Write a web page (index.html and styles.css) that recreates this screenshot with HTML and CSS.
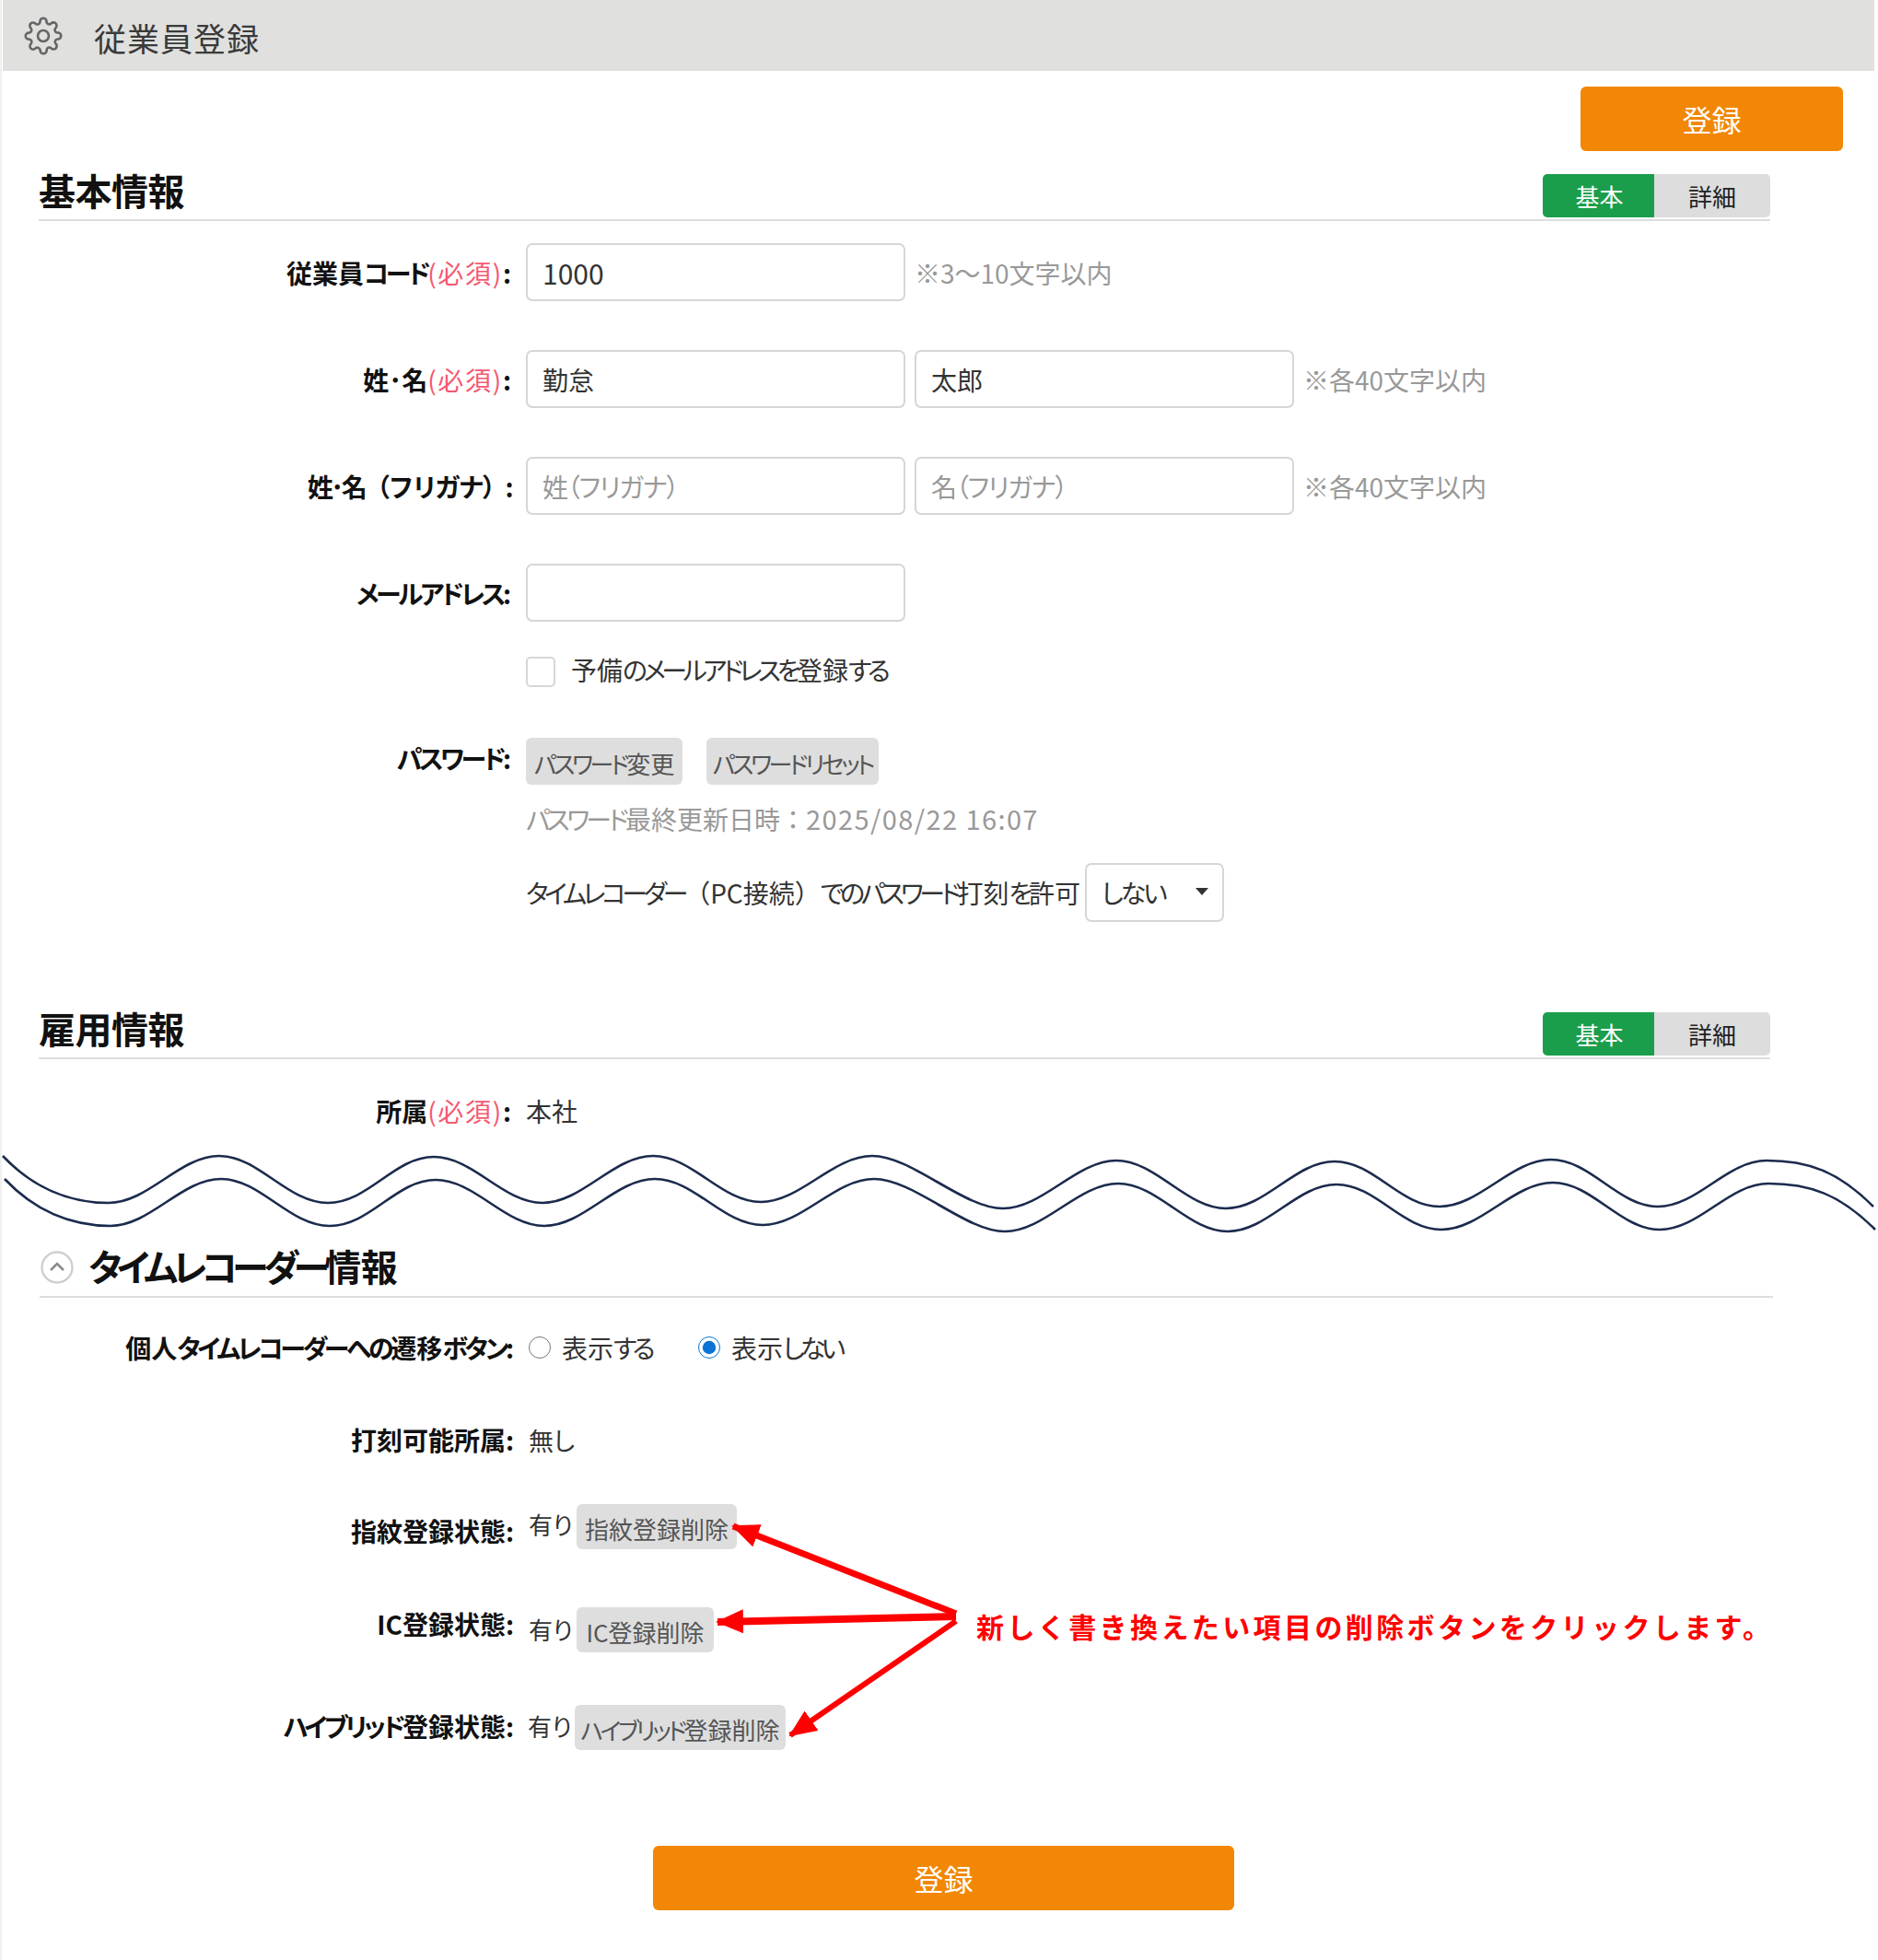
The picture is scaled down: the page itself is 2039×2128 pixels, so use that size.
FILE: index.html
```html
<!DOCTYPE html>
<html lang="ja">
<head>
<meta charset="utf-8">
<title>従業員登録</title>
<link rel="stylesheet" href="styles.css">
</head>
<body>
<div class="page">
  <header class="topbar">
    <svg class="gear" viewBox="0 0 24 24" fill="none" stroke="#666" stroke-width="1.5" stroke-linejoin="round"><circle cx="12" cy="12" r="3.4"/><path d="M19.4 15a1.65 1.65 0 0 0 .33 1.82l.06.06a2 2 0 0 1 0 2.83 2 2 0 0 1-2.83 0l-.06-.06a1.65 1.65 0 0 0-1.82-.33 1.65 1.65 0 0 0-1 1.51V21a2 2 0 0 1-2 2 2 2 0 0 1-2-2v-.09A1.65 1.65 0 0 0 9 19.4a1.65 1.65 0 0 0-1.82.33l-.06.06a2 2 0 0 1-2.83 0 2 2 0 0 1 0-2.83l.06-.06a1.65 1.65 0 0 0 .33-1.82 1.65 1.65 0 0 0-1.51-1H3a2 2 0 0 1-2-2 2 2 0 0 1 2-2h.09A1.65 1.65 0 0 0 4.6 9a1.65 1.65 0 0 0-.33-1.82l-.06-.06a2 2 0 0 1 0-2.83 2 2 0 0 1 2.83 0l.06.06a1.65 1.65 0 0 0 1.82.33H9a1.65 1.65 0 0 0 1-1.51V3a2 2 0 0 1 2-2 2 2 0 0 1 2 2v.09a1.65 1.65 0 0 0 1 1.51 1.65 1.65 0 0 0 1.82-.33l.06-.06a2 2 0 0 1 2.83 0 2 2 0 0 1 0 2.83l-.06.06a1.65 1.65 0 0 0-.33 1.82V9a1.65 1.65 0 0 0 1.51 1H21a2 2 0 0 1 2 2 2 2 0 0 1-2 2h-.09a1.65 1.65 0 0 0-1.51 1z"/></svg>
    <h1 class="page-title">従業員登録</h1>
  </header>

  <div class="toolbar"><button class="btn-primary btn-top">登録</button></div>

  <section class="section sec-basic">
    <div class="sec-head">
      <h2 class="sec-title">基本情報</h2>
      <div class="tabs"><span class="tab tab-on">基本</span><span class="tab">詳細</span></div>
    </div>
    <div class="row row-first">
      <div class="label">従業員<span class="kana">コード</span><span class="req">(必須)</span>:</div>
      <input class="field field-num" value="1000">
      <span class="hint">※3～10文字以内</span>
    </div>
    <div class="row">
      <div class="label">姓･名<span class="req">(必須)</span>:</div>
      <input class="field" value="勤怠">
      <input class="field" value="太郎">
      <span class="hint">※各40文字以内</span>
    </div>
    <div class="row">
      <div class="label label-wide">姓･名（フリガナ）:</div>
      <input class="field" placeholder="姓（フリガナ）">
      <input class="field" placeholder="名（フリガナ）">
      <span class="hint">※各40文字以内</span>
    </div>
    <div class="row">
      <div class="label"><span class="kana">メールアドレス</span>:</div>
      <input class="field">
    </div>
    <div class="indent check-row">
      <span class="checkbox"></span>
      <span class="check-text">予備<span class="kana">のメールアドレスを</span>登録<span class="kana">する</span></span>
    </div>
    <div class="row-pass">
      <div class="label"><span class="kana">パスワード</span>:</div>
      <button class="btn-gray btn-change"><span class="kana">パスワード</span>変更</button>
      <button class="btn-gray btn-reset"><span class="kana">パスワードリセット</span></button>
    </div>
    <div class="indent updated"><span class="kana">パスワード</span>最終更新日時<span class="wide">：</span><span class="digits">2025/08/22 16:07</span></div>
    <div class="indent select-row">
      <span class="select-text"><span class="kana">タイムレコーダー</span><span class="wide">（</span>PC接続<span class="wide">）</span><span class="kana">でのパスワード</span>打刻<span class="kana">を</span>許可</span>
      <div class="select-wrap">
        <select class="select"><option>しない</option></select>
      </div>
    </div>
  </section>

  <section class="section sec-employ">
    <div class="sec-head">
      <h2 class="sec-title">雇用情報</h2>
      <div class="tabs"><span class="tab tab-on">基本</span><span class="tab">詳細</span></div>
    </div>
    <div class="row-text row-dept">
      <div class="label">所属<span class="req">(必須)</span>:</div>
      <span class="value">本社</span>
    </div>
  </section>

  <svg class="wave" viewBox="0 1240 2039 110" fill="none" stroke="#1b2b4d" stroke-width="2.6">
    <g id="waveline"><path d="M3 1256C35 1290 75 1307 118 1307S195 1256 238 1256 312 1307 356 1307 428 1257 471 1257 546 1307 589 1307 666 1256 709 1256 783 1306 826 1306 904 1256 947 1256 1046 1313 1089 1313 1169 1261 1212 1261 1288 1313 1331 1313 1406 1262 1449 1262 1520 1311 1563 1311 1641 1260 1684 1260 1757 1311 1800 1311 1875 1261 1918 1261C1962 1261 1995 1272 2034 1311"/></g>
    <use href="#waveline" x="2" y="25"/>
  </svg>

  <section class="section sec-recorder">
    <div class="sec-head sec-head-collapse">
      <span class="collapse"><svg viewBox="0 0 36 36" fill="none"><circle cx="18" cy="18" r="16.5" stroke="#cfcfcf" stroke-width="2.4"/><path d="M11 21l7-7 7 7" stroke="#8a8a8a" stroke-width="2.6"/></svg></span>
      <h2 class="sec-title"><span class="kana">タイムレコーダー</span>情報</h2>
    </div>
    <div class="row-text row-radio">
      <div class="label">個人<span class="kana">タイムレコーダーへの</span>遷移<span class="kana">ボタン</span>:</div>
      <label class="radio-item"><input class="radio" type="radio" name="show"><span>表示<span class="kana">する</span></span></label>
      <label class="radio-item"><input class="radio" type="radio" name="show" checked><span>表示<span class="kana">しない</span></span></label>
    </div>
    <div class="row-text row-stamp">
      <div class="label">打刻可能所属:</div>
      <span class="value value-none">無<span class="kana">し</span></span>
    </div>
    <div class="row-del row-finger">
      <div class="label">指紋登録状態:</div>
      <span class="value del-value">有<span class="kana">り</span></span>
      <button class="btn-gray btn-del">指紋登録削除</button>
    </div>
    <div class="row-del row-ic">
      <div class="label">IC登録状態:</div>
      <span class="value del-value">有<span class="kana">り</span></span>
      <button class="btn-gray btn-del">IC登録削除</button>
    </div>
    <div class="row-del row-hybrid">
      <div class="label"><span class="kana">ハイブリッド</span>登録状態:</div>
      <span class="value del-value">有<span class="kana">り</span></span>
      <button class="btn-gray btn-del"><span class="kana">ハイブリッド</span>登録削除</button>
    </div>
    <div class="note">新しく書き換えたい項目の削除ボタンをクリックします。</div>
  </section>

  <div class="bottom"><button class="btn-primary btn-bottom">登録</button></div>

  <svg class="arrows" viewBox="0 0 300 260" fill="none" stroke="#f00">
    <defs><marker id="head" markerUnits="userSpaceOnUse" markerWidth="30" markerHeight="26" refX="28" refY="13" orient="auto"><path d="M0 0L30 13 0 26z" fill="#f00" stroke="none"/></marker></defs>
    <path d="M262 102L20 7" stroke-width="7" marker-end="url(#head)"/>
    <path d="M262 105L3 111" stroke-width="8" marker-end="url(#head)"/>
    <path d="M262 110L82 234" stroke-width="6" marker-end="url(#head)"/>
  </svg>
</div>
</body>
</html>
```

FILE: styles.css
```css
* { box-sizing: border-box; font-feature-settings: "palt"; }
html, body { margin: 0; padding: 0; background: #fff; }
body { font-family: "Noto Sans CJK JP", "Noto Sans", sans-serif; color: #333; }
button, input, select { font-family: inherit; }

.kana { letter-spacing: -0.13em; }
.wide { font-feature-settings: normal; }

.page { position: relative; width: 2039px; height: 2128px; box-shadow: inset 2px 0 0 #f0f0f0; }

.topbar {
  display: flex; align-items: center; gap: 34px;
  height: 77px; margin-left: 3px; width: 2032px;
  padding-left: 23px; background: #e0e0de;
}
.gear { width: 42px; height: 42px; }
.page-title { margin: 3px 0 0; font-size: 35px; font-weight: 400; letter-spacing: 1px; color: #3a3a3a; line-height: 1; }

.toolbar { display: flex; justify-content: flex-end; padding: 17px 38px 0 0; }
.btn-primary {
  border: 0; border-radius: 6px; background: #f28705; color: #fff;
  font-size: 32px; height: 70px; padding: 0;
}
.btn-top { width: 285px; }

.section { margin-left: 42px; width: 1880px; }
.sec-basic { margin-top: 25px; }
.sec-employ { margin-top: 98px; }
.sec-recorder { position: relative; margin-left: 43px; width: 1882px; }

.sec-head {
  display: flex; justify-content: space-between; align-items: flex-start;
  height: 51px; border-bottom: 2px solid #ddd;
}
.sec-title { margin: -3px 0 0; font-size: 40px; font-weight: 700; color: #111; line-height: 40px; font-feature-settings: normal; letter-spacing: -0.5px; }
.sec-title .kana { font-feature-settings: "palt"; letter-spacing: -0.14em; }
.sec-head-collapse { justify-content: flex-start; align-items: center; gap: 16px; height: 65px; padding-bottom: 0; }
.sec-head-collapse .sec-title { line-height: 48px; }
.collapse { display: flex; width: 36px; height: 36px; margin-left: 1px; }
.collapse svg { width: 36px; height: 36px; }

.tabs { display: flex; height: 47px; border-radius: 5px; overflow: hidden; background: #ddd; }
.tab { display: flex; align-items: center; justify-content: center; width: 126px; font-size: 26px; color: #222; }
.tab-on { width: 121px; padding-left: 2px; background: #1b9e4b; color: #fff; }

.row { display: flex; align-items: center; gap: 10px; height: 63px; margin-top: 53px; }
.row-first { margin-top: 24px; }
.label {
  flex: none; width: 513px; margin-right: 16px; text-align: right;
  font-size: 28px; font-weight: 700; color: #111; white-space: nowrap;
}
.label .kana { letter-spacing: -0.12em; }
.label-wide { font-feature-settings: normal; letter-spacing: -2.6px; }
.row .label { margin-right: 6px; }
.req { color: #f5586f; font-weight: 400; letter-spacing: 1.7px; }
.field {
  width: 412px; height: 63px; padding: 0 16px;
  border: 2px solid #d6d6d6; border-radius: 7px; background: #fff;
  font-size: 28px; color: #333; outline: none;
}
.field-num { font-size: 30px; }
.field::placeholder { color: #999; opacity: 1; letter-spacing: -1.2px; }
.hint { font-size: 28px; color: #999; }

.indent { margin-left: 529px; }
.check-row { display: flex; align-items: center; gap: 17px; height: 33px; margin-top: 38px; }
.checkbox { width: 32px; height: 33px; border: 2px solid #d6d6d6; border-radius: 5px; }
.check-text { margin-top: -5px; font-size: 28px; }
.check-text .kana { letter-spacing: -0.16em; }

.row-pass { display: flex; align-items: flex-start; margin-top: 55px; height: 51px; }
.row-pass .label { line-height: 44px; }
.btn-gray {
  display: flex; align-items: center; justify-content: center; height: 51px; padding: 4px 0 0;
  border: 0; border-radius: 6px; background: #dedede;
  font-size: 26px; color: #555; white-space: nowrap;
}
.btn-change { width: 170px; }
.btn-reset { width: 187px; margin-left: 26px; }

.updated { height: 40px; margin-top: 16px; line-height: 40px; font-size: 28px; color: #999; }
.digits { font-size: 29px; letter-spacing: 1.4px; }
.select-row { display: flex; align-items: center; gap: 11px; margin-top: 29px; height: 64px; }
.select-text { font-size: 28px; width: 596px; white-space: nowrap; }
.select-text .kana { letter-spacing: -0.155em; }
.select-wrap { position: relative; width: 151px; height: 64px; }
.select-wrap::after {
  content: ""; position: absolute; right: 17px; top: 27px;
  border: 7px solid transparent; border-top: 8px solid #333; border-bottom: 0;
}
.select {
  appearance: none; width: 100%; height: 100%; padding: 0 16px;
  border: 2px solid #d6d6d6; border-radius: 7px; background: #fff;
  font-size: 28px; letter-spacing: -3px; color: #333;
}

.row-text { display: flex; align-items: center; height: 40px; }
.row-dept { margin-top: 36px; }
.value { font-size: 28px; color: #333; white-space: nowrap; }
.value-none { font-size: 27px; }

.wave { display: block; width: 2039px; height: 110px; margin-top: 13px; }
.sec-recorder { margin-top: -5px; }

.sec-recorder .label { width: 515px; margin-right: 16px; }
.row-radio { margin-top: 34px; }
.radio-item { display: flex; align-items: center; gap: 12px; width: 184px; font-size: 28px; white-space: nowrap; }
.radio-item .kana { letter-spacing: -0.17em; }
.radio { width: 24px; height: 24px; margin: 0; accent-color: #0b74d6; }
.row-stamp { margin-top: 60px; }

.row-del { display: flex; align-items: center; height: 49px; }
.del-value { flex: none; width: 52px; font-size: 26px; }
.btn-del { height: 49px; }
.row-finger { margin-top: 50px; }
.row-finger .btn-del { width: 174px; }
.row-finger .del-value { margin-top: -6px; }
.row-finger .label { margin-top: 9px; }
.row-ic { margin-top: 63px; }
.row-ic .btn-del { width: 149px; }
.row-ic .label { margin-top: -14px; }
.row-ic .del-value { margin-top: -3px; }
.row-hybrid { margin-top: 57px; }
.row-hybrid .btn-del { width: 229px; }
.sec-recorder .row-hybrid .label { margin: -4px 15px 0 0; }
.row-hybrid .del-value { width: 51px; margin-top: -4px; }

.note {
  position: absolute; left: 1017px; top: 399px; font-feature-settings: normal;
  font-size: 30px; font-weight: 700; color: #f00; letter-spacing: 3.4px; white-space: nowrap; line-height: 44px;
}

.bottom { display: flex; margin: 104px 0 0 709px; }
.btn-bottom { width: 631px; }

.arrows { position: absolute; left: 776px; top: 1650px; width: 300px; height: 260px; }
```
